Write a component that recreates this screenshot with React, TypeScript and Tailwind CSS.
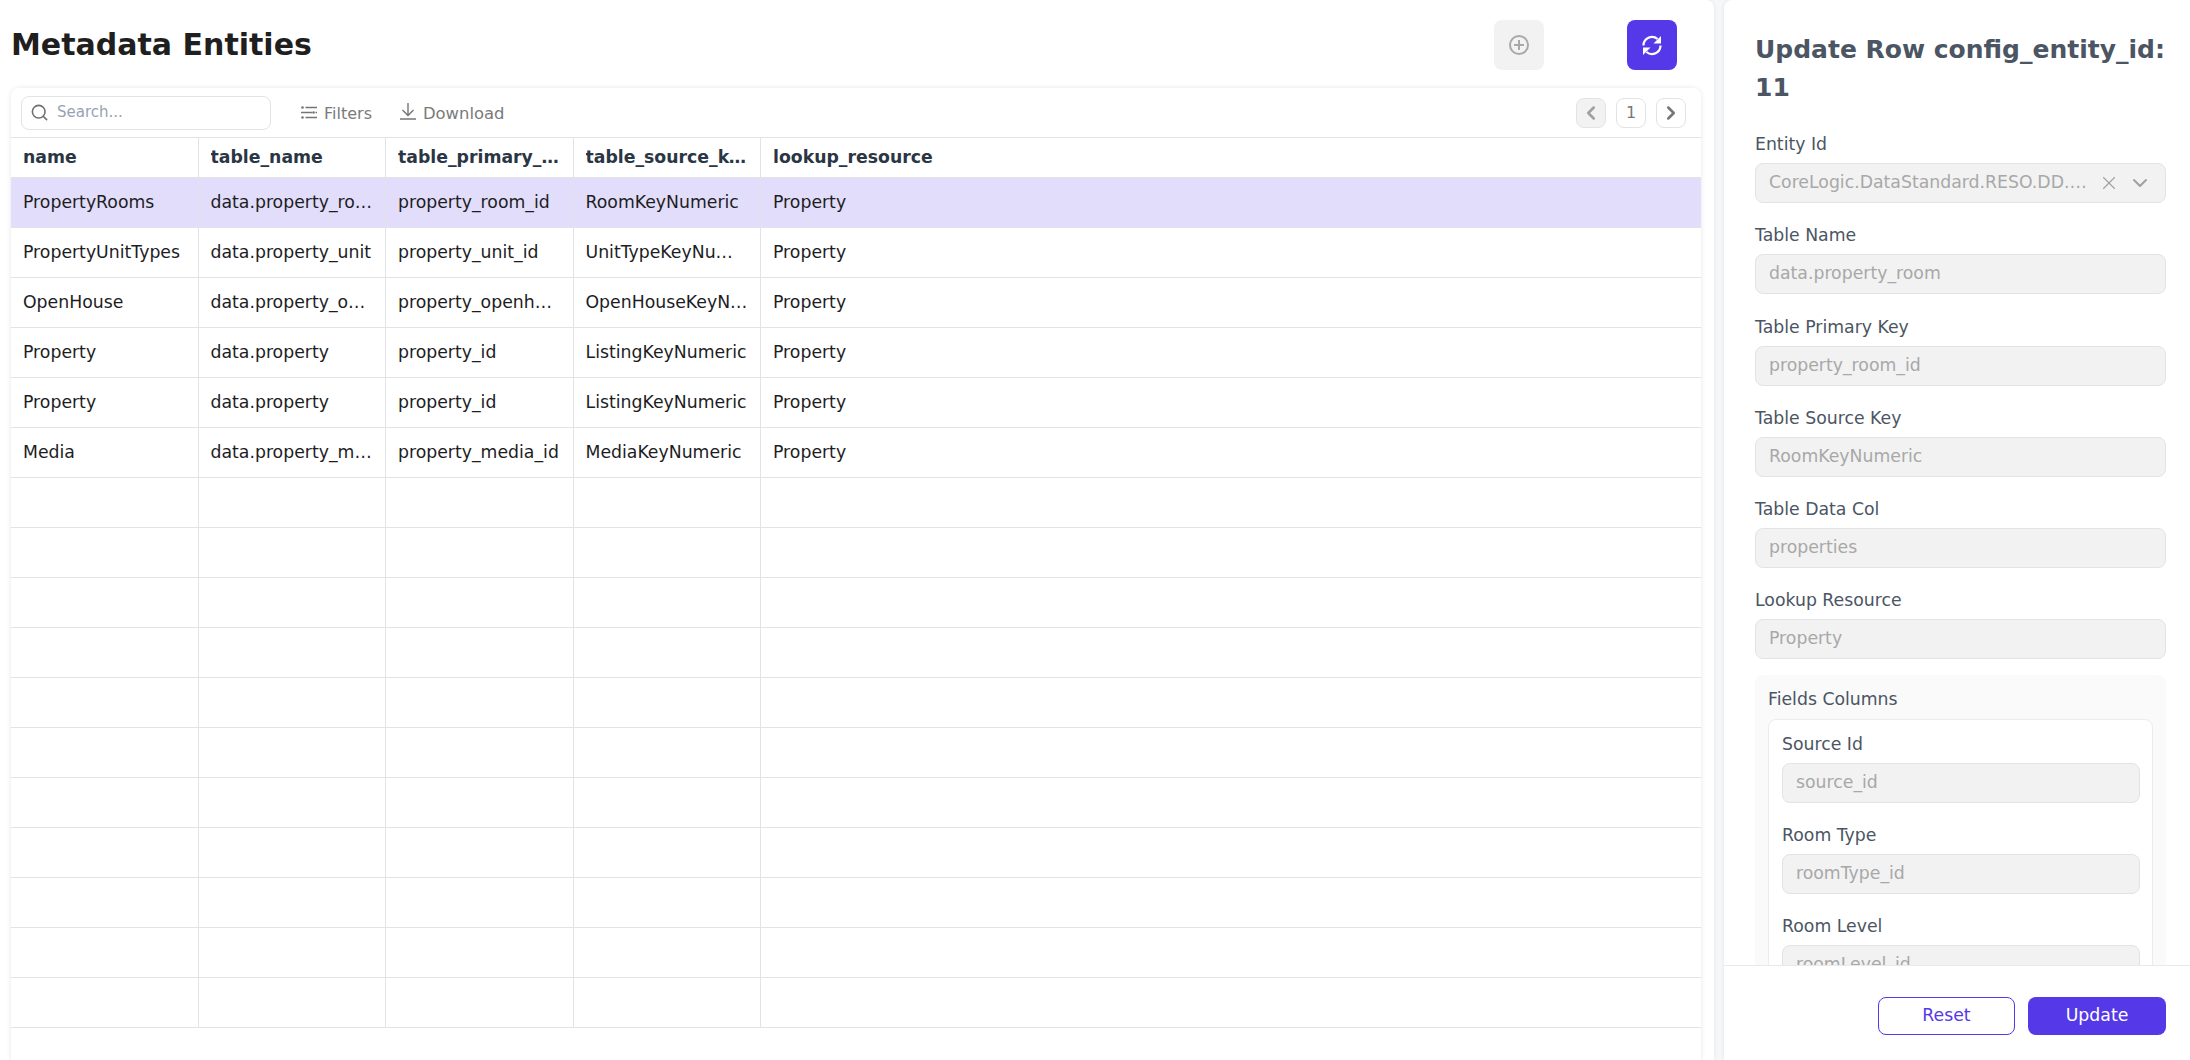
import React from "react";
import { Search, ChevronLeft, ChevronRight, X, ChevronDown } from "lucide-react";

const rows: string[][] = [
  ["PropertyRooms", "data.property_room", "property_room_id", "RoomKeyNumeric", "Property"],
  ["PropertyUnitTypes", "data.property_unit", "property_unit_id", "UnitTypeKeyNumeric", "Property"],
  ["OpenHouse", "data.property_openhouse", "property_openhouse_id", "OpenHouseKeyNumeric", "Property"],
  ["Property", "data.property", "property_id", "ListingKeyNumeric", "Property"],
  ["Property", "data.property", "property_id", "ListingKeyNumeric", "Property"],
  ["Media", "data.property_media", "property_media_id", "MediaKeyNumeric", "Property"],
  ...Array.from({ length: 11 }, () => ["", "", "", "", ""]),
];
const headers = ["name", "table_name", "table_primary_key", "table_source_key", "lookup_resource"];

function Cell({ children, last, head }: { children?: React.ReactNode; last?: boolean; head?: boolean }) {
  return (
    <div
      className={
        (last ? "flex-1 " : "w-[187.5px] shrink-0 border-r border-[#e1e3e6] ") +
        "h-full flex items-center px-3 min-w-0 " +
        (head ? "font-bold text-[#2a3644]" : "text-[#1d1d1f]")
      }
    >
      <span className="truncate block w-full">{children}</span>
    </div>
  );
}

function Field({ label, value }: { label: string; value: string }) {
  return (
    <div className="mb-[15.25px]">
      <div className="h-[36px] flex items-center text-[#4b5563]">{label}</div>
      <div className="h-[40px] rounded-[8px] border border-[#e2e3e5] bg-[#f2f2f2] flex items-center px-[13px] text-[#a8a8a8]">
        {value}
      </div>
    </div>
  );
}

export default function App() {
  return (
    <div className="flex h-[1060px] w-full overflow-hidden bg-[#f6f7f9] text-[17.3px] font-['DejaVu_Sans',sans-serif]">
      <div className="w-[1714px] h-full bg-white rounded-tr-[8px] shadow-[0_0_4px_rgba(0,0,0,0.08)] flex flex-col">
        <div className="h-[88px] shrink-0 flex items-center pl-[11px] pr-[37px]">
          <h1 className="text-[30px] font-bold text-[#1f1f1f] flex-1 mt-[1px]">Metadata Entities</h1>
          <button className="w-[50px] h-[50px] mt-[2px] rounded-[8px] bg-[#f2f2f2] flex items-center justify-center mr-[83px]">
            <svg width="20" height="20" viewBox="0 0 20 20" fill="none" stroke="#a8a8a8" strokeWidth="2">
              <circle cx="10" cy="10" r="9" />
              <path d="M10 5v10M5 10h10" />
            </svg>
          </button>
          <button className="w-[50px] h-[50px] mt-[2px] rounded-[8px] bg-[#5539e8] flex items-center justify-center">
            <svg width="20" height="21" viewBox="0 0 20 21" fill="none" stroke="#fff" strokeWidth="2.2">
              <path d="M1.5 10.5A8.5 8.5 0 0 1 15.5 4" />
              <path d="M18.5 10.5A8.5 8.5 0 0 1 4.5 17" />
              <path d="M19 1v7.5h-7.5z" fill="#fff" stroke="none" />
              <path d="M1 20v-7.5h7.5z" fill="#fff" stroke="none" />
            </svg>
          </button>
        </div>
        <div className="ml-[11px] w-[1690px] flex-1 rounded-t-[8px] bg-white shadow-[0_0_5px_rgba(0,0,0,0.1)] flex flex-col">
          <div className="h-[50px] shrink-0 border-b border-[#e1e3e6] flex items-start pl-[10px] pr-[15px]">
            <div className="mt-[8px] w-[250px] h-[34px] rounded-[8px] border border-[#e2e3e5] flex items-center pl-[8px] text-[15px] text-[#98a2b3]">
              <Search size={19} strokeWidth={2} color="#6f6f6f" className="mr-[8px] -mt-[1px]" />
              <span className="-mt-[1px]">Search...</span>
            </div>
            <div className="ml-[30px] mt-[9px] h-[34px] flex items-center text-[#7a7a7a] text-[16px]">
              <svg width="16" height="13" viewBox="0 0 16 13" fill="none" stroke="#757575" strokeWidth="1.5" className="mr-[7px] -mt-[4px]">
                <path d="M4.5 1.5H16M0 6.5h11M14.5 6.5H16M4.5 11.5H16" />
                <circle cx="1.5" cy="1.5" r="1.3" fill="#757575" stroke="none" />
                <circle cx="12.5" cy="6.5" r="1.3" fill="#757575" stroke="none" />
                <circle cx="1.5" cy="11.5" r="1.3" fill="#757575" stroke="none" />
              </svg>
              <span>Filters</span>
            </div>
            <div className="ml-[28px] mt-[9px] h-[34px] flex items-center text-[#7a7a7a] text-[16.4px]">
              <svg width="16" height="17" viewBox="0 0 16 17" fill="none" stroke="#757575" strokeWidth="1.4" className="mr-[7px] -mt-[5px]">
                <path d="M8 0v12M2.5 7l5.5 5.5L13.5 7M0 16h16" />
              </svg>
              <span>Download</span>
            </div>
            <div className="ml-auto mt-[9.5px] flex gap-[10px] text-[#777]">
              <div className="w-[30px] h-[30px] rounded-[8px] border border-[#e2e3e5] bg-[#f2f2f2] flex items-center justify-center">
                <ChevronLeft size={22} strokeWidth={2.8} color="#a0a0a0" />
              </div>
              <div className="w-[30px] h-[30px] rounded-[8px] border border-[#e2e3e5] flex items-center justify-center text-[16px]">1</div>
              <div className="w-[30px] h-[30px] rounded-[8px] border border-[#e2e3e5] flex items-center justify-center">
                <ChevronRight size={22} strokeWidth={2.8} color="#777" />
              </div>
            </div>
          </div>
          <div className="h-[40px] shrink-0 flex border-b border-[#e1e3e6]">
            {headers.map((h, i) => (
              <Cell key={h} head last={i === 4}>{h}</Cell>
            ))}
          </div>
          {rows.map((r, i) => (
            <div key={i} className={"h-[50px] shrink-0 flex border-b border-[#e1e3e6] " + (i === 0 ? "bg-[#e2ddfb]" : "")}>
              {r.map((c, j) => (
                <Cell key={j} last={j === 4}>{c}</Cell>
              ))}
            </div>
          ))}
        </div>
      </div>
      <div className="ml-[10px] flex-1 min-w-0 h-full bg-white rounded-tl-[8px] shadow-[0_0_4px_rgba(0,0,0,0.08)] flex flex-col">
        <div className="flex-1 min-h-0 overflow-hidden pl-[31px] pr-[24px] pt-[31px]">
          <h2 className="text-[25px] leading-[38px] font-bold text-[#4b5563] mb-[20px]">Update Row config_entity_id: 11</h2>
          <div className="mb-[15.25px]">
            <div className="h-[36px] flex items-center text-[#4b5563]">Entity Id</div>
            <div className="h-[40px] rounded-[8px] border border-[#e2e3e5] bg-[#f2f2f2] flex items-center pl-[13px] pr-[13px] text-[#a8a8a8]">
              <span className="truncate flex-1">CoreLogic.DataStandard.RESO.DD.Property</span>
              <X size={22} strokeWidth={1.2} color="#a0a0a0" className="ml-[8px] mr-[8px] shrink-0" />
              <ChevronDown size={24} strokeWidth={2} color="#a0a0a0" className="shrink-0" />
            </div>
          </div>
          <Field label="Table Name" value="data.property_room" />
          <Field label="Table Primary Key" value="property_room_id" />
          <Field label="Table Source Key" value="RoomKeyNumeric" />
          <Field label="Table Data Col" value="properties" />
          <Field label="Lookup Resource" value="Property" />
          <div className="mt-[6px] rounded-t-[8px] bg-[#fafafa] px-[13px] pt-[7px]">
            <div className="h-[36px] mb-[1px] flex items-center text-[#4b5563]">Fields Columns</div>
            <div className="rounded-t-[8px] border border-[#ececec] bg-white pl-[13px] pr-[12px] pt-[7px]">
              <Field label="Source Id" value="source_id" />
              <Field label="Room Type" value="roomType_id" />
              <Field label="Room Level" value="roomLevel_id" />
            </div>
          </div>
        </div>
        <div className="h-[95px] shrink-0 border-t border-[#e8e9eb] bg-white flex justify-end items-start pt-[31px] pr-[24px] gap-[13px]">
          <button className="w-[137px] h-[38px] rounded-[8px] border border-[#5539e8] text-[#5539e8] bg-white flex items-center justify-center">Reset</button>
          <button className="w-[138px] h-[38px] rounded-[8px] bg-[#5539e8] text-white flex items-center justify-center">Update</button>
        </div>
      </div>
    </div>
  );
}
